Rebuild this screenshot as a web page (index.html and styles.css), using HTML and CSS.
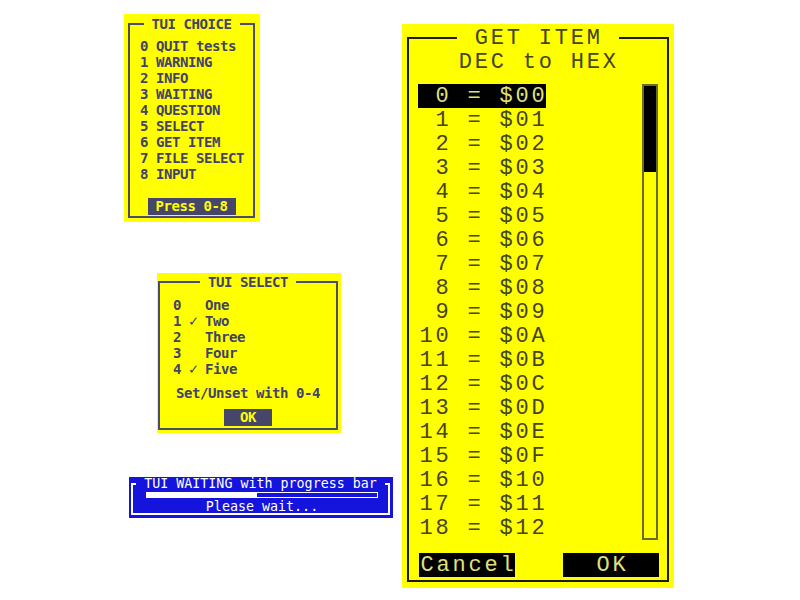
FILE: index.html
```html
<!DOCTYPE html>
<html lang="en">
<head>
<meta charset="utf-8">
<title>TUI tests</title>
<link rel="stylesheet" href="styles.css">
</head>
<body>
<div class="desk">

  <section class="win tui choice">
    <div class="frame">
      <div class="title"> TUI CHOICE </div>
      <ul class="items">
        <li>0 QUIT tests</li>
        <li>1 WARNING</li>
        <li>2 INFO</li>
        <li>3 WAITING</li>
        <li>4 QUESTION</li>
        <li>5 SELECT</li>
        <li>6 GET ITEM</li>
        <li>7 FILE SELECT</li>
        <li>8 INPUT</li>
      </ul>
      <div class="btn press"> Press 0-8 </div>
    </div>
  </section>

  <section class="win tui select">
    <div class="frame">
      <div class="title"> TUI SELECT </div>
      <ul class="items">
        <li>0   One</li>
        <li>1 <span class="chk">✓</span> Two</li>
        <li>2   Three</li>
        <li>3   Four</li>
        <li>4 <span class="chk">✓</span> Five</li>
      </ul>
      <div class="hint">Set/Unset with 0-4</div>
      <div class="btn ok">  OK  </div>
    </div>
  </section>

  <section class="win waiting">
    <div class="wframe">
      <div class="wtitle"> TUI WAITING with progress bar </div>
      <div class="bar"><div class="fill" style="width:48%"></div></div>
      <div class="wmsg">Please wait...</div>
    </div>
  </section>

  <section class="win getitem">
    <div class="gframe">
      <div class="gtitle"> GET ITEM </div>
      <div class="gsub">DEC to HEX</div>
      <div class="gbody">
        <ul class="glist">
          <li class="sel"> 0 = $00</li>
          <li> 1 = $01</li>
          <li> 2 = $02</li>
          <li> 3 = $03</li>
          <li> 4 = $04</li>
          <li> 5 = $05</li>
          <li> 6 = $06</li>
          <li> 7 = $07</li>
          <li> 8 = $08</li>
          <li> 9 = $09</li>
          <li>10 = $0A</li>
          <li>11 = $0B</li>
          <li>12 = $0C</li>
          <li>13 = $0D</li>
          <li>14 = $0E</li>
          <li>15 = $0F</li>
          <li>16 = $10</li>
          <li>17 = $11</li>
          <li>18 = $12</li>
        </ul>
        <div class="scroll"><div class="thumb"></div></div>
      </div>
      <div class="gbtns">
        <div class="gbtn">Cancel</div>
        <div class="gbtn">  OK  </div>
      </div>
    </div>
  </section>

</div>
</body>
</html>
```

FILE: styles.css
```css
* { box-sizing: border-box; margin: 0; padding: 0; }
html, body { width: 800px; height: 600px; background: #ffffff; overflow: hidden; }
ul { list-style: none; }

.desk { position: relative; width: 800px; height: 600px; }
.win { position: absolute; }

/* text leaves keep their spaces */
.title, .items li, .btn, .hint,
.wtitle, .wmsg,
.gtitle, .gsub, .glist li, .gbtn { white-space: pre; }

/* yellow TUI windows with bold pixel-like font */
.tui {
  background: #ffff00;
  color: #42426a;
  font-family: "DejaVu Sans Mono", monospace;
  font-weight: bold;
  font-size: 14px;
  letter-spacing: -0.43px;
  line-height: 16px;
}
.frame {
  height: 100%;
  border: 2px solid #4c4c6e;
  display: flex;
  flex-direction: column;
  align-items: center;
}
.title { background: #ffff00; margin-top: -9px; height: 16px; }
.items { align-self: flex-start; }
.items li { height: 16px; }
.btn { background: #46466a; color: #ffff00; height: 17px; }
.chk {
  display: inline-block;
  width: 8px;
  font-size: 15px;
  font-weight: normal;
  letter-spacing: 0;
}

.choice { left: 124px; top: 14px; width: 136px; height: 208px; padding: 9px 5px 4px 4px; }
.choice .items { margin-top: 6px; margin-left: 10px; }
.choice .press { margin-top: 16px; }

.select { left: 157px; top: 273px; width: 184px; height: 160px; padding: 8px 3px 3px 1px; }
.select .items { margin-top: 7px; margin-left: 13px; }
.select .hint { margin-top: 8px; height: 16px; }
.select .ok { margin-top: 8px; }

/* blue waiting window */
.waiting {
  left: 129px; top: 477px; width: 264px; height: 41px;
  padding: 6px 3px 3px 2px;
  background: #1414dc;
  color: #ffffff;
  font-family: "DejaVu Sans Mono", monospace;
  font-size: 13.33px;
  line-height: 12px;
}
.wframe {
  height: 100%;
  border: 2px solid #ffffff;
  display: flex;
  flex-direction: column;
  align-items: center;
}
.wtitle { background: #1414dc; margin-top: -7px; height: 12px; }
.bar {
  margin-top: 2px;
  width: 232px; height: 6px;
  border: 1px solid #ffffff;
  margin-left: 3px;
}
.fill { height: 100%; background: #ffffff; }
.wmsg { margin-top: 3px; margin-left: 3px; height: 12px; }

/* get item window */
.getitem {
  left: 402px; top: 24px; width: 272px; height: 564px;
  padding: 13px 5px 6px 5px;
  background: #ffff00;
  color: #44441e;
  font-family: "Liberation Mono", "Courier New", monospace;
  font-size: 22px;
  letter-spacing: 2.8px;
  line-height: 22px;
}
.gframe {
  height: 100%;
  border: 2px solid #1c1c00;
  display: flex;
  flex-direction: column;
  align-items: center;
}
.gtitle { background: #ffff00; margin-top: -13px; height: 24px; padding: 2px 0 0 1.4px; }
.gsub { height: 24px; padding: 2px 0 0 1.4px; }
.gbody {
  align-self: stretch;
  display: flex;
  margin-top: 10px;
  padding-left: 9px;
  padding-right: 9px;
}
.glist li { height: 24px; width: 128px; padding: 2px 0 0 1.4px; }
.glist li.sel { background: #000000; color: #e0e078; }
.scroll {
  margin-left: auto;
  width: 16px; height: 456px;
  border: 2px solid #6c6c2a;
  background: #ffff00;
}
.thumb { height: 86px; background: #000000; }
.gbtns {
  align-self: stretch;
  display: flex;
  gap: 48px;
  margin-top: 13px;
  padding-left: 10px;
}
.gbtn { width: 96px; height: 24px; padding: 2px 0 0 1.4px; background: #000000; color: #e0e078; }
```
